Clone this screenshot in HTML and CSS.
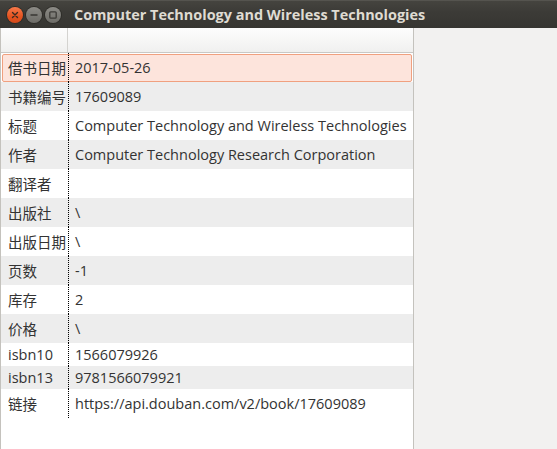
FILE: index.html
```html
<!DOCTYPE html>
<html lang="zh">
<head>
<meta charset="utf-8">
<title>Computer Technology and Wireless Technologies</title>
<link rel="stylesheet" href="styles.css">
</head>
<body>
<div class="window">
  <header class="titlebar">
    <div class="controls">
      <span class="btn close"><svg viewBox="0 0 16 16" width="16" height="16"><path d="M5.5 5.5 L10.5 10.5 M10.5 5.5 L5.5 10.5" stroke="#3a2a20" stroke-width="1.4" stroke-linecap="round"/></svg></span>
      <span class="btn"><svg viewBox="0 0 16 16" width="16" height="16"><path d="M4.5 8 H11.5" stroke="#3c3b37" stroke-width="1.6"/></svg></span>
      <span class="btn"><svg viewBox="0 0 16 16" width="16" height="16"><rect x="4.8" y="4.8" width="6.4" height="6.4" rx="1" fill="none" stroke="#3c3b37" stroke-width="1.3"/></svg></span>
    </div>
    <div class="title">Computer Technology and Wireless Technologies</div>
  </header>
  <main class="content">
    <section class="table">
      <div class="thead">
        <div class="th first"></div>
        <div class="th"></div>
      </div>
      <div class="row selected"><div class="key">借书日期</div><div class="val">2017-05-26</div></div>
      <div class="row alt"><div class="key">书籍编号</div><div class="val">17609089</div></div>
      <div class="row"><div class="key">标题</div><div class="val">Computer Technology and Wireless Technologies</div></div>
      <div class="row alt"><div class="key">作者</div><div class="val">Computer Technology Research Corporation</div></div>
      <div class="row"><div class="key">翻译者</div><div class="val"></div></div>
      <div class="row alt"><div class="key">出版社</div><div class="val">\</div></div>
      <div class="row"><div class="key">出版日期</div><div class="val">\</div></div>
      <div class="row alt"><div class="key">页数</div><div class="val">-1</div></div>
      <div class="row"><div class="key">库存</div><div class="val">2</div></div>
      <div class="row alt"><div class="key">价格</div><div class="val">\</div></div>
      <div class="row short"><div class="key">isbn10</div><div class="val">1566079926</div></div>
      <div class="row short alt"><div class="key">isbn13</div><div class="val">9781566079921</div></div>
      <div class="row"><div class="key">链接</div><div class="val">https://api.douban.com/v2/book/17609089</div></div>
    </section>
    <aside class="side"></aside>
  </main>
</div>
</body>
</html>
```
FILE: styles.css
```css
* { box-sizing: border-box; }
html, body { margin: 0; padding: 0; }
body {
  width: 557px;
  height: 449px;
  overflow: hidden;
  font-family: "Open Sans", "Noto Sans CJK SC", sans-serif;
  background: #f2f1f0;
}
.window {
  display: flex;
  flex-direction: column;
  height: 449px;
}
.titlebar {
  height: 28px;
  flex: none;
  display: flex;
  align-items: center;
  background: linear-gradient(#45443f, #3c3b37 40%, #363531);
  border-top: 1px solid #55544f;
}
.controls {
  display: flex;
  gap: 3px;
  padding-left: 7px;
  padding-top: 1px;
}
.btn {
  width: 16px;
  height: 16px;
  border-radius: 50%;
  background: linear-gradient(#8c8b86, #6d6c67);
  box-shadow: 0 0 0 1px #2e2d29;
  display: flex;
}
.btn.close {
  background: linear-gradient(#f7794a, #e4531f 60%, #d44a1b);
}
.title {
  margin-left: 13px;
  color: #dfdbd2;
  font-weight: bold;
  font-size: 14.45px;
  white-space: nowrap;
}
.content {
  flex: 1;
  display: flex;
}
.table {
  width: 414px;
  flex: none;
  background: #fff;
  border-left: 1px solid #c4c2bd;
  border-right: 1px solid #c4c2bd;
  color: #333333;
  font-size: 14.5px;
}
.thead {
  height: 25px;
  display: grid;
  grid-template-columns: 67px 1fr;
  background: linear-gradient(#fdfdfd, #f0f0ef);
  border-bottom: 1px solid #c9c8c5;
}
.th.first { border-right: 1px solid #d4d3d0; }
.row {
  position: relative;
  height: 29px;
  display: grid;
  grid-template-columns: 67px 1fr;
  align-items: stretch;
}
.row.short { height: 23px; }
.row.alt { background: #ededed; }
.row.selected::before {
  content: "";
  position: absolute;
  top: 1px; left: 1px; right: 1px; bottom: 0;
  background: #fde4dc;
  border: 1px solid #f0a07f;
  border-radius: 2px;
}
.key, .val {
  position: relative;
  display: flex;
  align-items: center;
  white-space: nowrap;
}
.key { padding-left: 7px; }
.val {
  padding-left: 6px;
  border-left: 1px dotted #000;
}
.side { flex: 1; background: #f2f1f0; }
```
